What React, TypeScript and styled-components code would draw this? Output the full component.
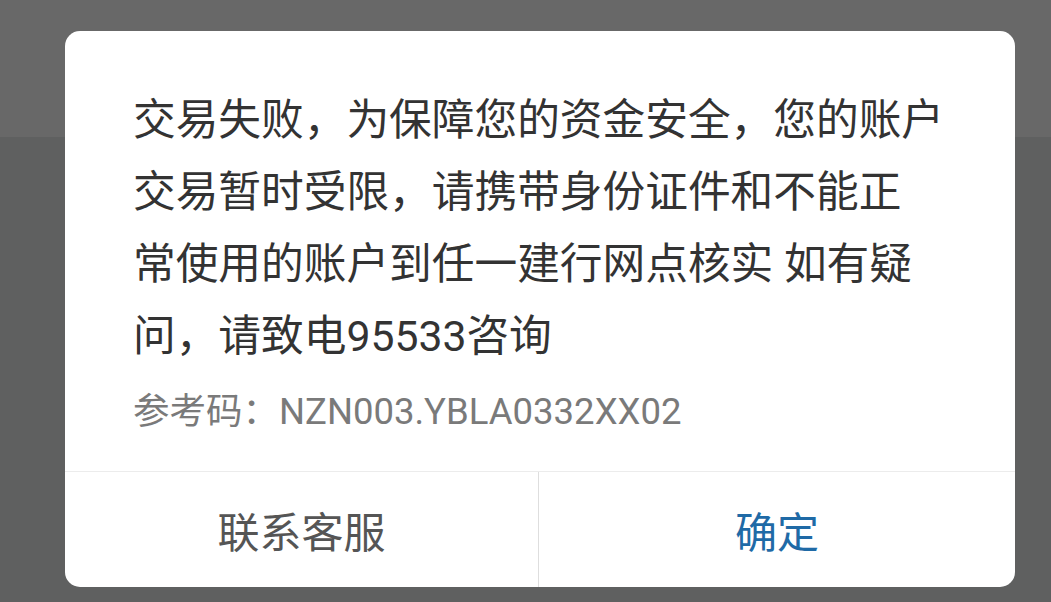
import React from "react";
import styled, { createGlobalStyle } from "styled-components";

const Global = createGlobalStyle`
  html, body { margin: 0; padding: 0; width: 100%; height: 100%; overflow: hidden; }
  body { background: #5f6060; font-family: Roboto, "Noto Sans CJK SC", sans-serif; }
  #root { width: 100%; height: 100%; }
`;

const Page = styled.div`
  position: relative;
  width: 1051px;
  height: 602px;
  display: flex;
  flex-direction: column;
`;

const Header = styled.div`
  height: 137px;
  background: #686868;
`;

const Body = styled.div`
  flex: 1;
  background: #5f6060;
`;

const Dialog = styled.div`
  position: absolute;
  left: 65px;
  top: 31px;
  width: 950px;
  height: 556px;
  background: #ffffff;
  border-radius: 15px;
  display: flex;
  flex-direction: column;
  overflow: hidden;
`;

const Content = styled.div`
  flex: 1;
  padding: 53px 40px 0 68px;
  box-sizing: border-box;
`;

const Message = styled.p`
  margin: 0;
  font-size: 42.7px;
  line-height: 72px;
  color: #333333;
  white-space: pre-line;
`;

const RefCode = styled.p`
  margin: 17px 0 0 0;
  font-size: 36.5px;
  line-height: 46px;
  color: #7a7a7a;
`;

const Actions = styled.div`
  height: 115px;
  display: grid;
  grid-template-columns: 474px 1fr;
  border-top: 1px solid #ececec;
`;

const ActionButton = styled.button<{ $primary?: boolean; $divider?: boolean }>`
  border: none;
  background: transparent;
  margin: 0;
  padding: 0;
  font-family: Roboto, "Noto Sans CJK SC", sans-serif;
  font-size: 42px;
  color: ${(p) => (p.$primary ? "#1f6aa6" : "#555555")};
  border-right: ${(p) => (p.$divider ? "1px solid #dedede" : "none")};
  display: flex;
  align-items: center;
  justify-content: center;
`;

export default function App() {
  return (
    <Page>
      <Global />
      <Header />
      <Body />
      <Dialog>
        <Content>
          <Message>
            {"交易失败，为保障您的资金安全，您的账户\n交易暂时受限，请携带身份证件和不能正\n常使用的账户到任一建行网点核实 如有疑\n问，请致电95533咨询"}
          </Message>
          <RefCode>参考码：NZN003.YBLA0332XX02</RefCode>
        </Content>
        <Actions>
          <ActionButton $divider>联系客服</ActionButton>
          <ActionButton $primary>确定</ActionButton>
        </Actions>
      </Dialog>
    </Page>
  );
}
